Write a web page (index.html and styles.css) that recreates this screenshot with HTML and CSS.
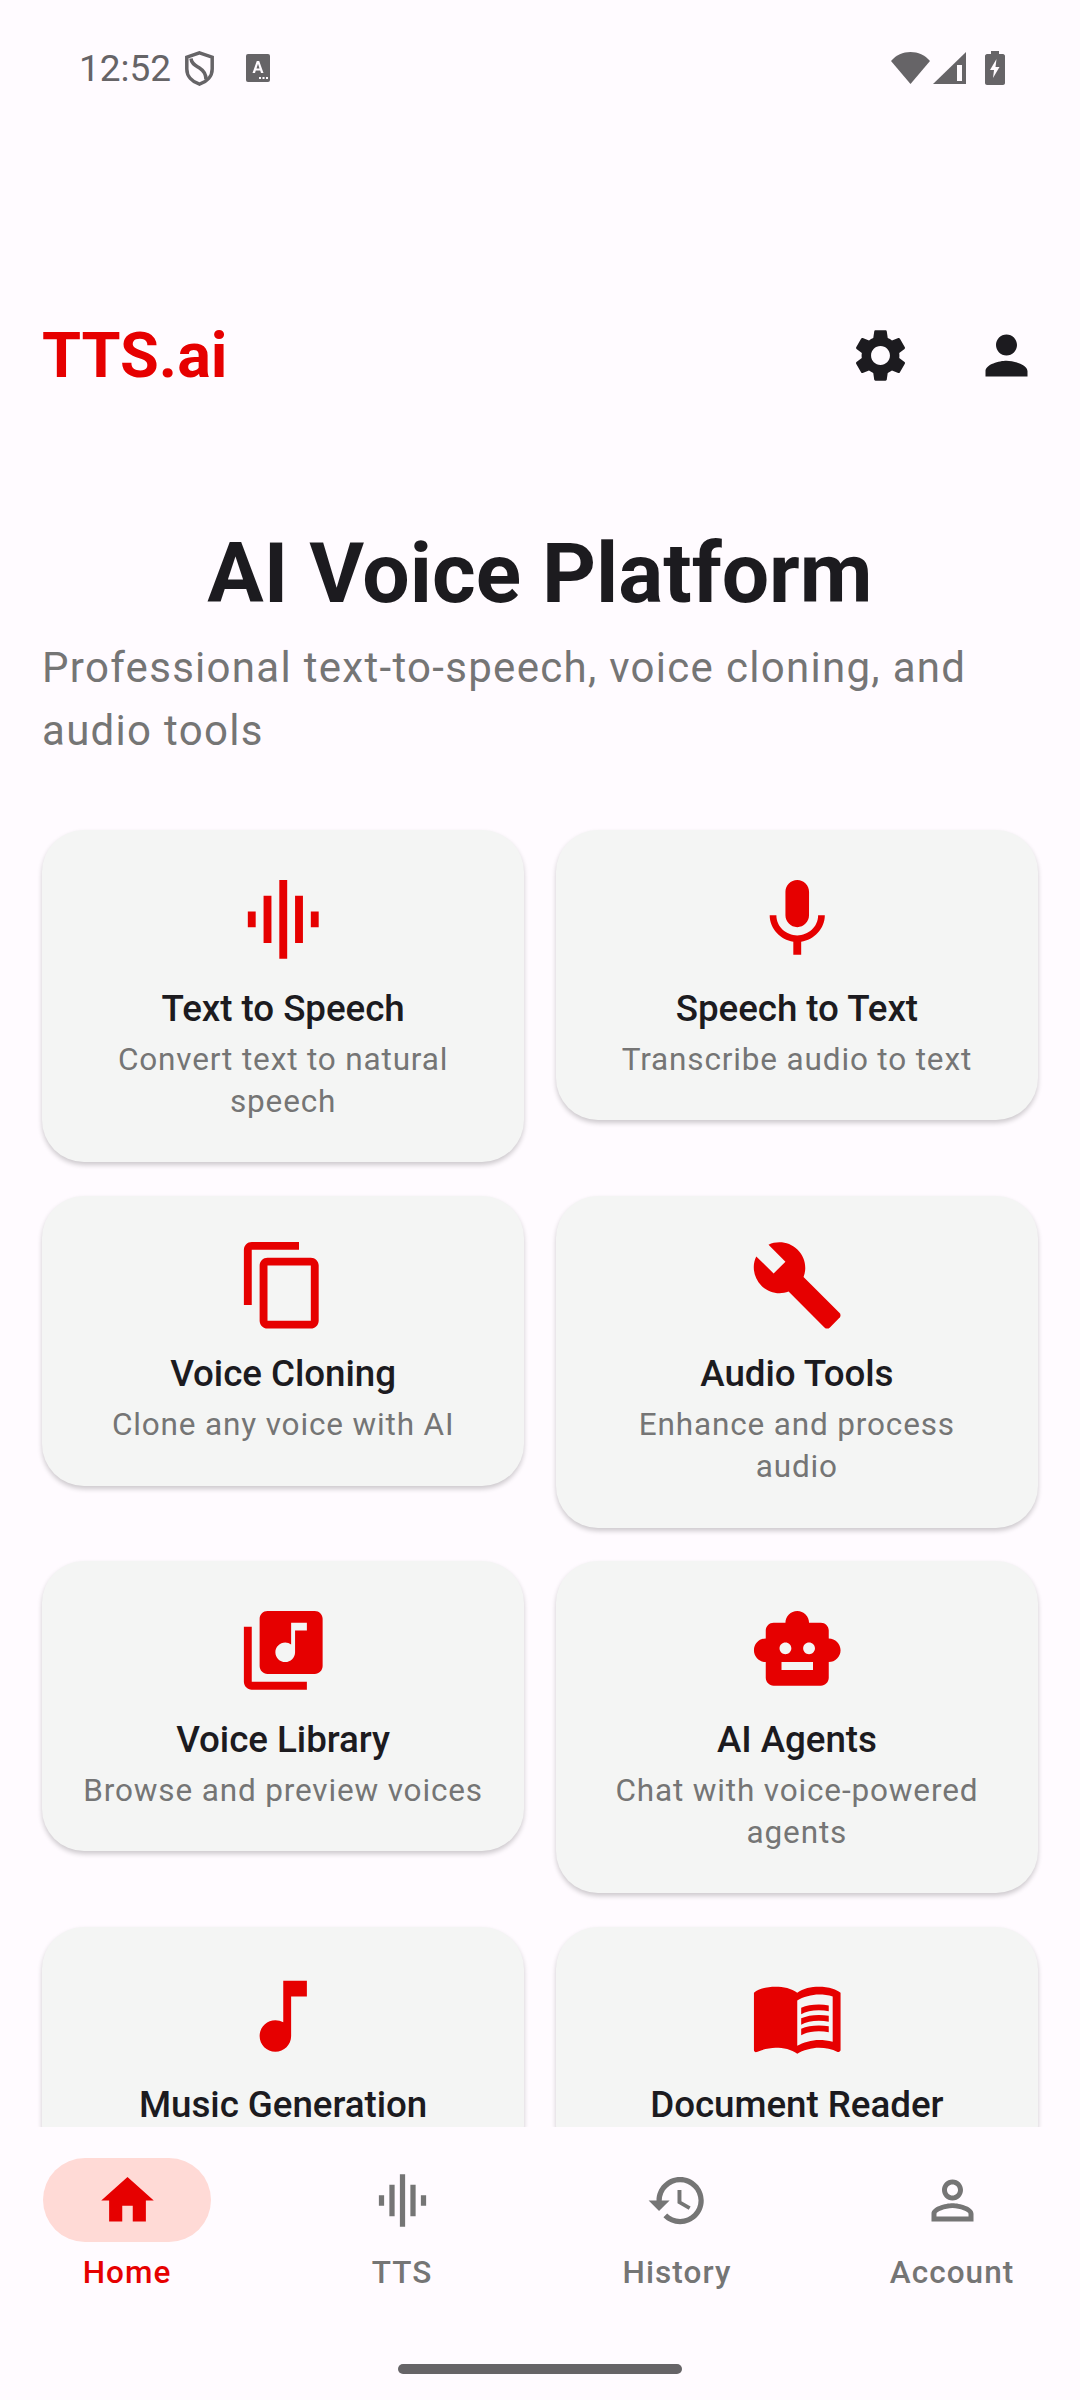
FILE: index.html
```html
<!DOCTYPE html>
<html lang="en">

<head>
    <meta charset="UTF-8">
    <meta name="viewport" content="width=device-width, initial-scale=1.0">
    <title>TTS.ai</title>
    <link rel="stylesheet" href="styles.css">
</head>

<body>
    <!-- Status bar -->
    <div class="status-bar">
        <span class="clock">12:52</span>
        <svg class="shield" viewBox="0 0 29 35"><path d="M14.5 1.800 27.200 6.200V18c0 7.200-5.200 12.800-12.700 15.200C7 30.800 1.800 25.200 1.800 18V6.200z" fill="none" stroke="#666467" stroke-width="3.500"/><path d="M6 7.500c.5 5.500 4.500 7 8.500 9.500s6.500 5.500 6.500 11.500" fill="none" stroke="#666467" stroke-width="3.500"/></svg>
        <svg class="keyboard" viewBox="0 0 24 28"><rect width="24" height="28" rx="2" fill="#666467"/><path d="M6.500 19 10.800 7h2.400l4.300 12h-2.500l-.8-2.500H9.800L9 19zM10.500 14.500h3L12 9.800z" fill="#fffbff"/><path d="M13 23h2v2h-2zM16.500 23h2v2h-2zM20 23h2v2h-2z" fill="#fffbff"/></svg>
        <div class="status-right">
            <svg class="wifi" viewBox="0 0 39 32"><path d="M0 9C5 3 12 0 19.500 0S34 3 39 9L19.500 32z" fill="#666467"/></svg>
            <svg class="signal" viewBox="0 0 33 32"><path d="M0 32 33 0v32z" fill="#666467"/><path d="M24 13h5v16h-5z" fill="#fffbff"/></svg>
            <svg class="battery" viewBox="0 0 20 34"><path d="M6 0h8v3h4c1 0 2 1 2 2v27c0 1-1 2-2 2H2c-1 0-2-1-2-2V5c0-1 1-2 2-2h4z" fill="#666467"/><path d="M11.500 8 5 19h4l-1 8 6.500-11h-4z" fill="#fffbff"/></svg>
        </div>
    </div>

    <!-- Top bar -->
    <header class="top-bar">
        <div class="brand">TTS.ai</div>
        <button class="icon-button">
            <svg class="icon-24" viewBox="0 0 24 24"><path d="M19.140 12.940c.04-.3.06-.61.06-.94 0-.32-.02-.64-.07-.94l2.030-1.580c.18-.14.23-.41.12-.61l-1.920-3.320c-.12-.22-.37-.29-.59-.22l-2.390.96c-.5-.38-1.030-.7-1.620-.94l-.36-2.540c-.04-.24-.24-.41-.48-.41h-3.840c-.24 0-.43.17-.47.41l-.36 2.540c-.59.24-1.130.57-1.620.94l-2.390-.96c-.22-.08-.47 0-.59.22L2.740 8.870c-.12.21-.08.47.12.61l2.030 1.580c-.05.3-.09.63-.09.94s.02.64.07.94l-2.030 1.580c-.18.14-.23.41-.12.61l1.920 3.320c.12.22.37.29.59.22l2.390-.96c.5.38 1.030.7 1.620.94l.36 2.540c.05.24.24.41.48.41h3.840c.24 0 .44-.17.47-.41l.36-2.540c.59-.24 1.130-.56 1.620-.94l2.390.96c.22.08.47 0 .59-.22l1.920-3.320c.12-.22.07-.47-.12-.61l-2.010-1.580zM12 15.600c-1.980 0-3.600-1.620-3.600-3.600s1.620-3.600 3.600-3.600 3.600 1.620 3.600 3.600-1.620 3.600-3.600 3.600z"/></svg>
        </button>
        <button class="icon-button">
            <svg class="icon-24" viewBox="0 0 24 24"><path d="M12 12c2.210 0 4-1.790 4-4s-1.790-4-4-4-4 1.790-4 4 1.790 4 4 4zm0 2c-2.670 0-8 1.340-8 4v2h16v-2c0-2.660-5.330-4-8-4z"/></svg>
        </button>
    </header>

    <main class="content">
        <div class="hero">
            <h1>AI Voice Platform</h1>
            <p>Professional text-to-speech, voice cloning, and audio tools</p>
        </div>

        <div class="card-grid">
            <div class="card">
                <svg class="card-icon" viewBox="0 0 24 24"><path d="M7 18h2V6H7v12zm4 4h2V2h-2v20zm-8-8h2v-4H3v4zm12 4h2V6h-2v12zm4-8v4h2v-4h-2z"/></svg>
                <div class="card-title">Text to Speech</div>
                <div class="card-desc">Convert text to natural speech</div>
            </div>
            <div class="card">
                <svg class="card-icon" viewBox="0 0 24 24"><path d="M12 14c1.660 0 2.990-1.340 2.990-3L15 5c0-1.660-1.340-3-3-3S9 3.340 9 5v6c0 1.660 1.340 3 3 3zm5.300-3c0 3-2.540 5.100-5.300 5.100S6.700 14 6.700 11H5c0 3.410 2.720 6.230 6 6.720V21h2v-3.280c3.280-.48 6-3.300 6-6.720h-1.700z"/></svg>
                <div class="card-title">Speech to Text</div>
                <div class="card-desc">Transcribe audio to text</div>
            </div>
            <div class="card">
                <svg class="card-icon" viewBox="0 0 24 24"><path d="M16 1H4c-1.100 0-2 .9-2 2v14h2V3h12V1zm3 4H8c-1.100 0-2 .9-2 2v14c0 1.100.9 2 2 2h11c1.100 0 2-.9 2-2V7c0-1.100-.9-2-2-2zm0 16H8V7h11v14z"/></svg>
                <div class="card-title">Voice Cloning</div>
                <div class="card-desc">Clone any voice with AI</div>
            </div>
            <div class="card">
                <svg class="card-icon" viewBox="0 0 24 24"><path d="M22.700 19l-9.100-9.100c.9-2.300.4-5-1.500-6.900-2-2-5-2.400-7.400-1.300L9 6 6 9 1.600 4.700C.4 7.100.9 10.100 2.900 12.100c1.900 1.900 4.600 2.400 6.900 1.500l9.100 9.100c.4.4 1 .4 1.400 0l2.300-2.300c.5-.4.5-1.100.1-1.400z"/></svg>
                <div class="card-title">Audio Tools</div>
                <div class="card-desc">Enhance and process audio</div>
            </div>
            <div class="card">
                <svg class="card-icon" viewBox="0 0 24 24"><path d="M20 2H8c-1.100 0-2 .9-2 2v12c0 1.100.9 2 2 2h12c1.100 0 2-.9 2-2V4c0-1.100-.9-2-2-2zm-2 5h-3v5.500c0 1.380-1.120 2.500-2.500 2.500S10 13.880 10 12.500s1.120-2.500 2.500-2.500c.57 0 1.080.19 1.500.51V5h4v2zM4 6H2v14c0 1.100.9 2 2 2h14v-2H4V6z"/></svg>
                <div class="card-title">Voice Library</div>
                <div class="card-desc">Browse and preview voices</div>
            </div>
            <div class="card">
                <svg class="card-icon" viewBox="0 0 24 24"><path d="M20 9V7c0-1.100-.9-2-2-2h-3c0-1.660-1.340-3-3-3S9 3.340 9 5H6c-1.100 0-2 .9-2 2v2c-1.660 0-3 1.340-3 3s1.340 3 3 3v4c0 1.100.9 2 2 2h12c1.100 0 2-.9 2-2v-4c1.660 0 3-1.340 3-3s-1.340-3-3-3zM7.500 11.500C7.500 10.670 8.170 10 9 10s1.500.67 1.500 1.500S9.830 13 9 13s-1.500-.67-1.500-1.500zM16 17H8v-2h8v2zm-1-4c-.83 0-1.500-.67-1.500-1.500S14.170 10 15 10s1.500.67 1.500 1.500S15.830 13 15 13z"/></svg>
                <div class="card-title">AI Agents</div>
                <div class="card-desc">Chat with voice-powered agents</div>
            </div>
            <div class="card">
                <svg class="card-icon" viewBox="0 0 24 24"><path d="M12 3v10.550c-.59-.34-1.270-.55-2-.55-2.210 0-4 1.790-4 4s1.790 4 4 4 4-1.790 4-4V7h4V3h-6z"/></svg>
                <div class="card-title">Music Generation</div>
            </div>
            <div class="card">
                <svg class="card-icon" viewBox="0 0 24 24"><path d="M21 5c-1.110-.35-2.330-.5-3.500-.5-1.950 0-4.050.4-5.500 1.500-1.450-1.100-3.550-1.500-5.500-1.500S2.450 4.900 1 6v14.650c0 .25.25.5.5.5.1 0 .15-.05.25-.05C3.100 20.450 5.050 20 6.500 20c1.950 0 4.050.4 5.500 1.500 1.350-.85 3.800-1.500 5.500-1.500 1.650 0 3.350.3 4.750 1.050.1.05.15.05.25.05.25 0 .5-.25.5-.5V6c-.6-.45-1.250-.75-2-1zm0 13.500c-1.100-.35-2.300-.5-3.500-.5-1.700 0-4.150.65-5.500 1.500V8c1.350-.85 3.800-1.500 5.500-1.500 1.200 0 2.400.15 3.500.5v11.500z"/><path d="M17.500 10.500c.88 0 1.730.09 2.500.26V9.240c-.79-.15-1.640-.24-2.500-.24-1.700 0-3.240.29-4.500.83v1.660c1.130-.64 2.700-.99 4.500-.99zM13 12.490v1.660c1.130-.64 2.700-.99 4.500-.99.88 0 1.730.09 2.500.26V11.900c-.79-.15-1.640-.24-2.500-.24-1.700 0-3.240.3-4.500.83zM17.500 14.330c-1.700 0-3.240.29-4.500.83v1.660c1.130-.64 2.700-.99 4.500-.99.88 0 1.730.09 2.500.26v-1.520c-.79-.16-1.640-.24-2.500-.24z"/></svg>
                <div class="card-title">Document Reader</div>
            </div>
        </div>
    </main>

    <!-- Bottom navigation -->
    <nav class="bottom-nav">
        <div class="nav-item active">
            <div class="nav-pill">
                <svg class="icon-24" viewBox="0 0 24 24"><path d="M10 20v-6h4v6h5v-8h3L12 3 2 12h3v8z"/></svg>
            </div>
            <span>Home</span>
        </div>
        <div class="nav-item">
            <div class="nav-pill">
                <svg class="icon-24" viewBox="0 0 24 24"><path d="M7 18h2V6H7v12zm4 4h2V2h-2v20zm-8-8h2v-4H3v4zm12 4h2V6h-2v12zm4-8v4h2v-4h-2z"/></svg>
            </div>
            <span>TTS</span>
        </div>
        <div class="nav-item">
            <div class="nav-pill">
                <svg class="icon-24" viewBox="0 0 24 24"><path d="M13 3c-4.970 0-9 4.030-9 9H1l3.890 3.890.07.14L9 12H6c0-3.870 3.130-7 7-7s7 3.130 7 7-3.130 7-7 7c-1.930 0-3.680-.79-4.940-2.060l-1.420 1.420C8.270 19.990 10.510 21 13 21c4.970 0 9-4.030 9-9s-4.030-9-9-9zm-1 5v5l4.280 2.540.72-1.210-3.500-2.080V8H12z"/></svg>
            </div>
            <span>History</span>
        </div>
        <div class="nav-item">
            <div class="nav-pill">
                <svg class="icon-24" viewBox="0 0 24 24"><path d="M12 5.900c1.160 0 2.100.94 2.100 2.100s-.94 2.100-2.100 2.100S9.900 9.160 9.900 8s.94-2.100 2.100-2.100m0 9c2.970 0 6.100 1.460 6.100 2.100v1.100H5.900V17c0-.64 3.130-2.100 6.100-2.100M12 4C9.790 4 8 5.790 8 8s1.790 4 4 4 4-1.790 4-4-1.790-4-4-4zm0 9c-2.670 0-8 1.340-8 4v3h16v-3c0-2.660-5.330-4-8-4z"/></svg>
            </div>
            <span>Account</span>
        </div>
    </nav>
    <div class="gesture-area">
        <div class="gesture-bar"></div>
    </div>
</body>

</html>
```

FILE: styles.css
```css
body {
    margin: 0;
    width: 1080px;
    height: 2400px;
    overflow: hidden;
    display: flex;
    flex-direction: column;
    background-color: #fffbff;
    font-family: Roboto, "Liberation Sans", sans-serif;
    color: #1c1b1f;
}

/* Status bar */
.status-bar {
    height: 136px;
    flex-shrink: 0;
    display: flex;
    align-items: center;
    padding: 0 75px 0 79px;
    box-sizing: border-box;
    color: #666467;
}

.clock {
    font-size: 37px;
    letter-spacing: 0;
}

.shield {
    width: 29px;
    height: 35px;
    margin-left: 14px;
}

.keyboard {
    width: 24px;
    height: 28px;
    margin-left: 32px;
}

.status-right {
    margin-left: auto;
    display: flex;
    align-items: center;
}

.wifi {
    width: 39px;
    height: 32px;
}

.signal {
    width: 33px;
    height: 32px;
    margin-left: 3px;
}

.battery {
    width: 20px;
    height: 34px;
    margin-left: 19px;
}

/* Top bar */
.top-bar {
    height: 168px;
    margin-top: 135px;
    flex-shrink: 0;
    display: flex;
    align-items: center;
    padding: 0 10.5px 0 42px;
    box-sizing: border-box;
}

.brand {
    flex: 1;
    font-size: 63px;
    font-weight: 700;
    color: #e60000;
}

.icon-button {
    width: 126px;
    height: 126px;
    padding: 0;
    border: none;
    background: none;
    display: flex;
    align-items: center;
    justify-content: center;
    color: #1c1b1f;
}

.icon-24 {
    width: 63px;
    height: 63px;
    fill: currentColor;
    display: block;
}

/* Main content */
.content {
    flex: 1;
    overflow: hidden;
    padding: 0 42px;
    min-height: 0;
}

.hero {
    padding-top: 82px;
}

.hero h1 {
    margin: 0;
    font-size: 84px;
    line-height: 105px;
    font-weight: 700;
    text-align: center;
}

.hero p {
    margin: 10px 0 0;
    font-size: 42px;
    line-height: 63px;
    letter-spacing: 1.3px;
    color: #757575;
}

.card-grid {
    margin-top: 68px;
    display: grid;
    grid-template-columns: 1fr 1fr;
    gap: 33.5px 31.5px;
    align-items: start;
}

.card {
    padding: 42px 40px 39.5px;
    border-radius: 42px;
    background-color: #f4f5f4;
    box-shadow: 0 3px 5px rgba(0, 0, 0, 0.2);
    display: flex;
    flex-direction: column;
    align-items: center;
    text-align: center;
}

.card-icon {
    width: 94.5px;
    height: 94.5px;
    fill: #e60000;
    margin-bottom: 21px;
}

.card-title {
    font-size: 36.75px;
    line-height: 42px;
    font-weight: 500;
    letter-spacing: -0.05px;
}

.card-desc {
    margin-top: 9px;
    font-size: 31.5px;
    line-height: 42px;
    letter-spacing: 0.85px;
    color: #757575;
}

/* Bottom navigation */
.bottom-nav {
    height: 210px;
    flex-shrink: 0;
    display: flex;
    gap: 21px;
    padding-top: 31px;
    box-sizing: border-box;
}

.nav-item {
    width: 254px;
    display: flex;
    flex-direction: column;
    align-items: center;
    color: #757575;
    font-size: 31.5px;
    line-height: 42px;
    font-weight: 500;
    letter-spacing: 1.05px;
}

.nav-pill {
    width: 168px;
    height: 84px;
    border-radius: 42px;
    margin-bottom: 10px;
    display: flex;
    align-items: center;
    justify-content: center;
}

.nav-item.active {
    color: #e60000;
}

.nav-item.active .nav-pill {
    background-color: #ffdad6;
}

.gesture-area {
    height: 63px;
    flex-shrink: 0;
    display: flex;
    justify-content: center;
    padding-top: 27px;
    box-sizing: border-box;
}

.gesture-bar {
    width: 284px;
    height: 10px;
    border-radius: 5px;
    background-color: #666467;
}
```
